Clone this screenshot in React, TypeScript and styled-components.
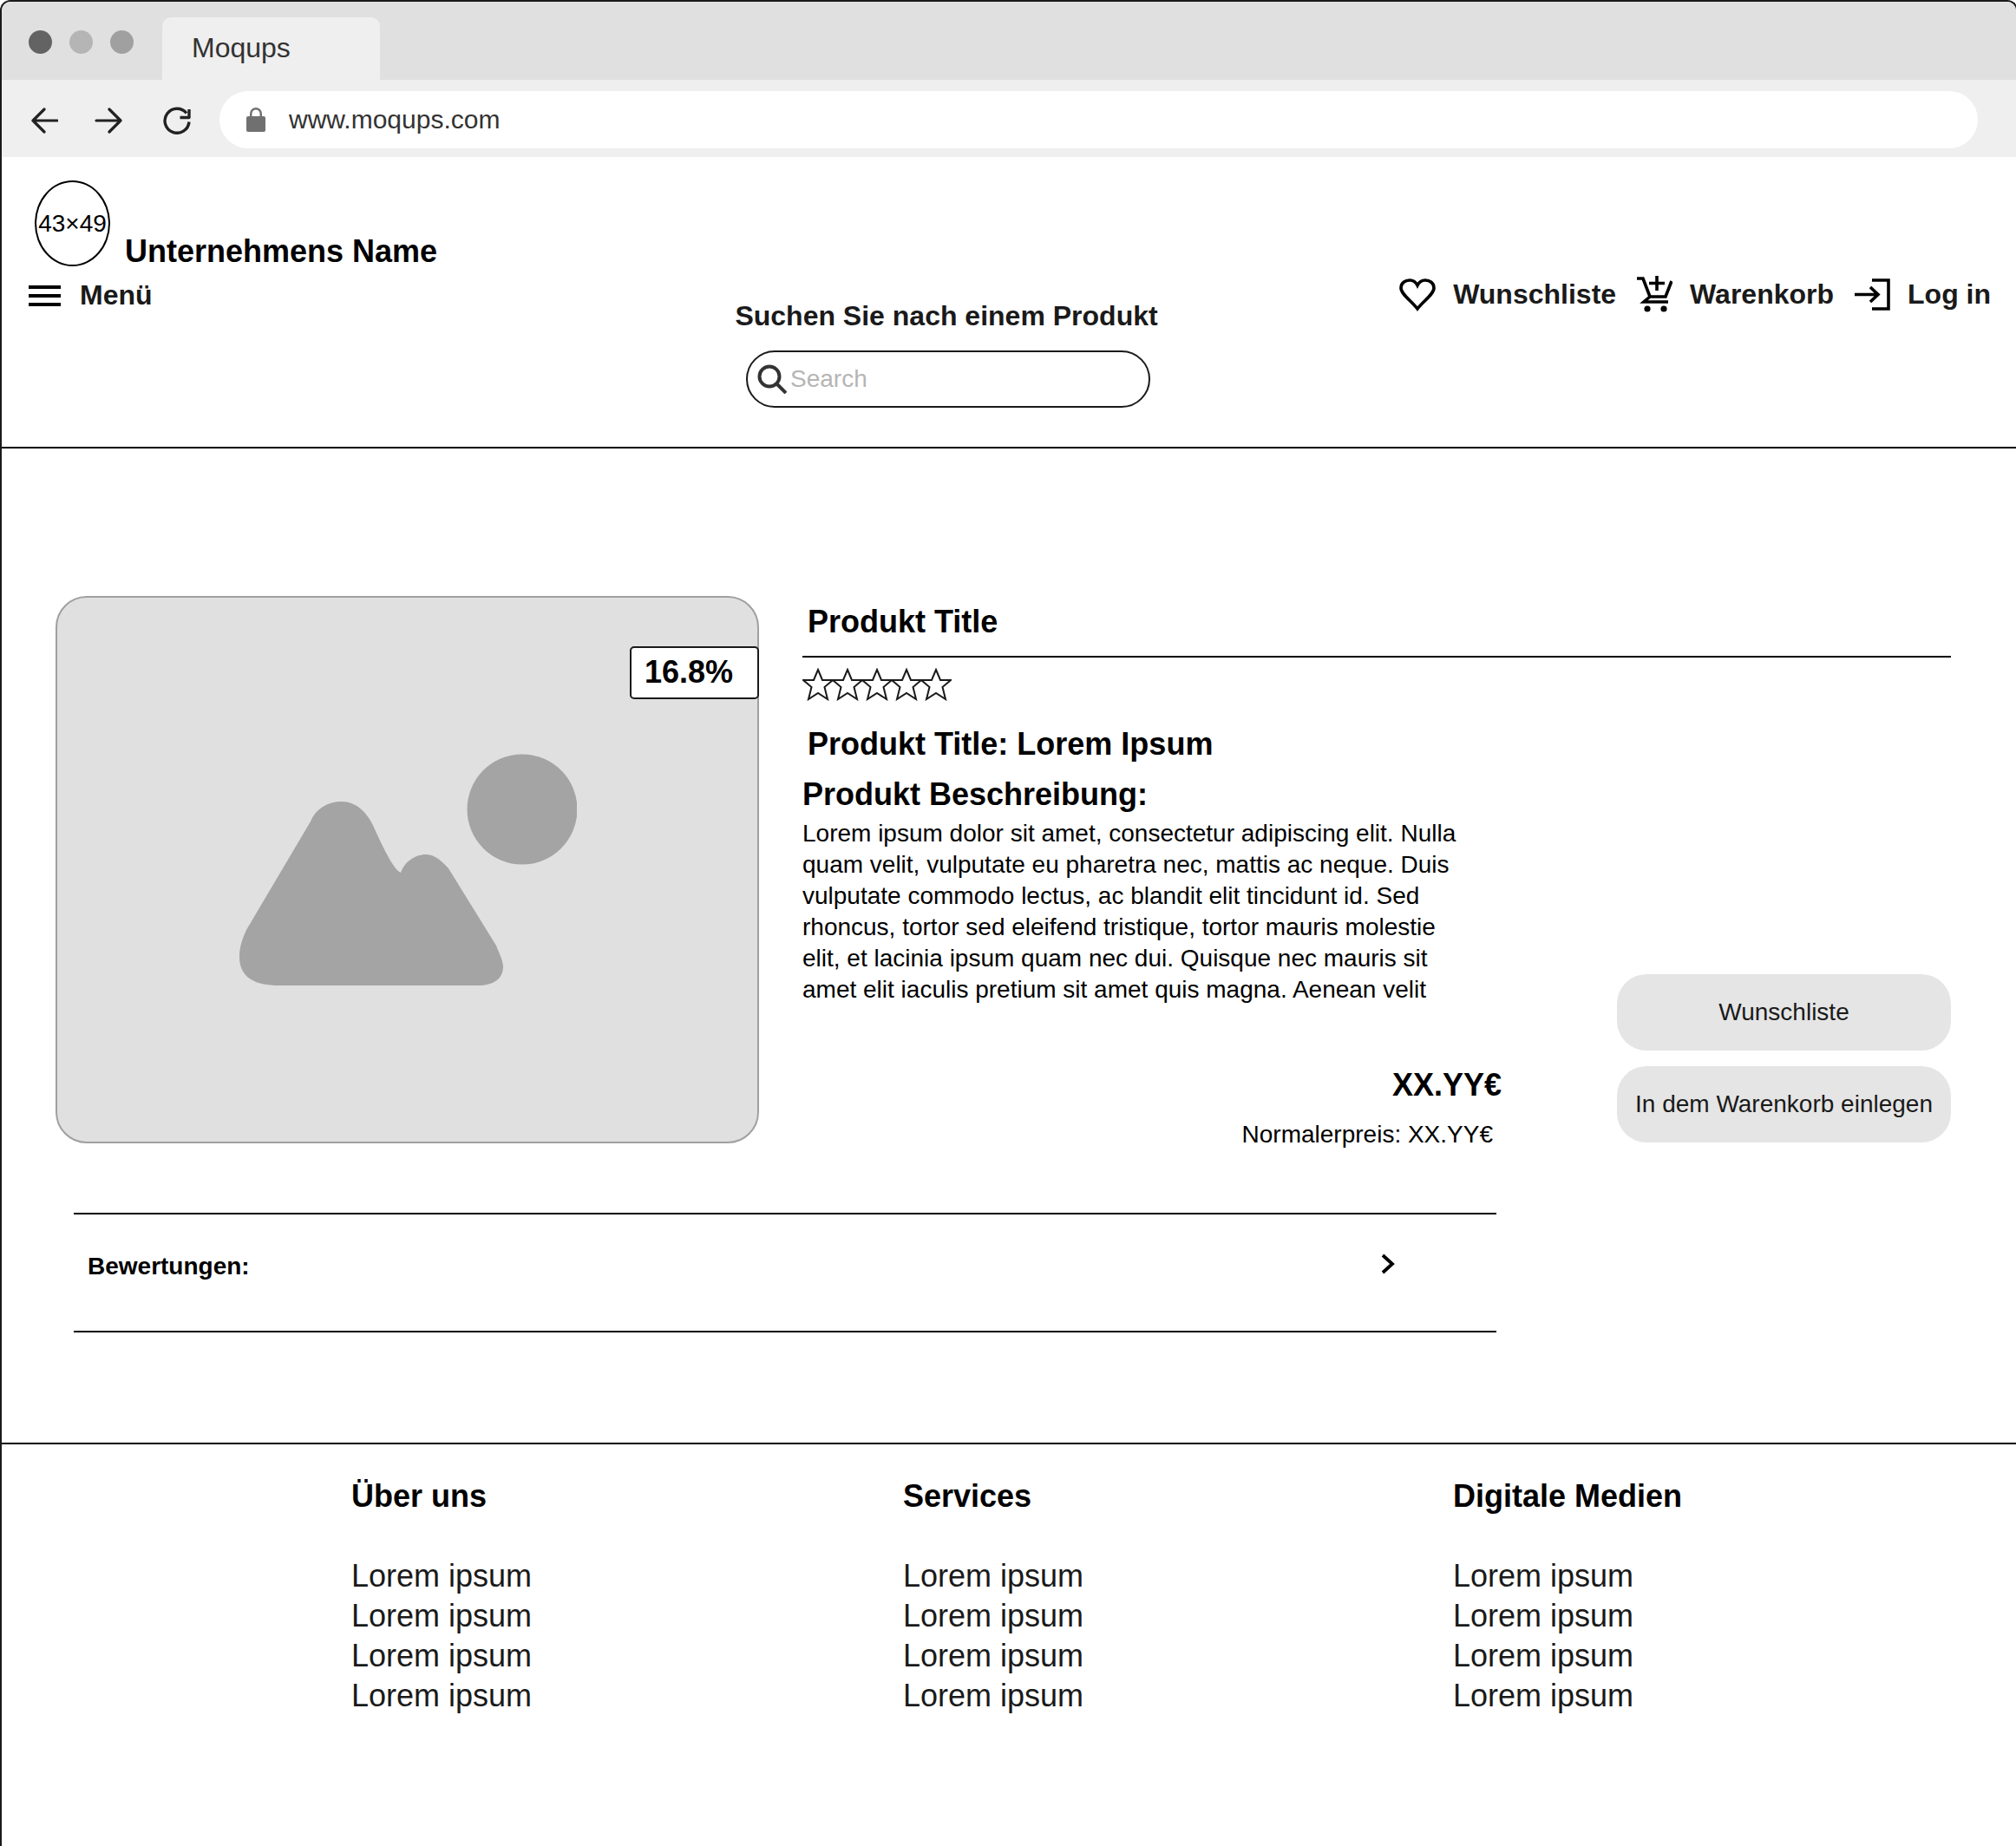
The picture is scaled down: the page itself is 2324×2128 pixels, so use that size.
import styled, { createGlobalStyle } from 'styled-components';

const GlobalStyle = createGlobalStyle`
  html, body {
    margin: 0;
    padding: 0;
    background: #fff;
    overflow: hidden;
  }
  * {
    box-sizing: border-box;
  }
`;

const Frame = styled.div`
  width: 2326px;
  height: 2128px;
  border-top: 2px solid #1a1a1a;
  border-left: 2px solid #1a1a1a;
  border-right: 2px solid #1a1a1a;
  border-radius: 12px 12px 0 0;
  overflow: hidden;
  font-family: 'Liberation Sans', Arial, sans-serif;
  color: #000;
`;

const TabStrip = styled.div`
  height: 90px;
  background: #e0e0e0;
  display: flex;
  padding-left: 31px;
`;

const Dots = styled.div`
  display: flex;
  gap: 20px;
  padding-top: 33px;
`;

const Dot = styled.span<{ $color: string }>`
  width: 27px;
  height: 27px;
  border-radius: 50%;
  background: ${(props) => props.$color};
`;

const Tab = styled.div`
  width: 251px;
  height: 72px;
  margin: 18px 0 0 33px;
  background: #efefef;
  border-radius: 10px 10px 0 0;
  padding: 17px 0 0 34px;
  font-size: 32px;
  line-height: 37px;
  color: #333;
`;

const Toolbar = styled.div`
  height: 89px;
  background: #efefef;
  display: flex;
  align-items: center;
  padding-left: 33px;
`;

const NavIcons = styled.div`
  display: flex;
  align-items: center;
  gap: 42px;
  width: 218px;
  padding-top: 4px;
`;

const ReloadIcon = styled.svg`
  margin-left: 5px;
`;

const AddressBar = styled.div`
  width: 2027px;
  height: 66px;
  margin-top: 2px;
  background: #fff;
  border-radius: 33px;
  display: flex;
  align-items: center;
  gap: 27px;
  padding-left: 31px;
  font-size: 30px;
  color: #333;
`;

const Header = styled.header`
  height: 336px;
  border-bottom: 2px solid #000;
  display: grid;
  grid-template-columns: 815px 486px 1fr;
  padding: 27px 29px 0 31px;
`;

const Brand = styled.div`
  display: flex;
  align-items: flex-end;
  gap: 17px;
  padding-left: 7px;
`;

const Logo = styled.div`
  width: 87px;
  height: 99px;
  border: 2px solid #000;
  border-radius: 50%;
  display: flex;
  align-items: center;
  justify-content: center;
  font-size: 28px;
  white-space: nowrap;
`;

const BrandName = styled.div`
  font-size: 36px;
  font-weight: 700;
  line-height: 41px;
  margin-bottom: -3px;
`;

const HeaderLink = styled.div`
  display: flex;
  align-items: center;
  height: 43px;
  font-size: 32px;
  font-weight: 700;
  line-height: 37px;
  color: #1a1a1a;
  white-space: nowrap;
`;

const MenuLink = styled(HeaderLink)`
  gap: 22px;
  margin-top: 12px;
`;

const SearchBlock = styled.div`
  display: flex;
  flex-direction: column;
  align-items: center;
  padding-top: 138px;
`;

const SearchTitle = styled.div`
  font-size: 32px;
  font-weight: 700;
  line-height: 37px;
  color: #1a1a1a;
  white-space: nowrap;
`;

const SearchField = styled.div`
  width: 466px;
  height: 66px;
  margin: 21px 0 0 4px;
  border: 2px solid #1a1a1a;
  border-radius: 33px;
  display: flex;
  align-items: center;
  gap: 4px;
  padding-left: 11px;
  font-size: 28px;
  color: #b5b5b5;
`;

const HeaderActions = styled.div`
  display: flex;
  align-items: flex-start;
  justify-content: flex-end;
  gap: 24px;
  padding-top: 110px;
`;

const ActionIcon = styled.span`
  display: flex;
  margin-right: 20px;
`;

const Main = styled.main`
  height: 1148px;
  border-bottom: 2px solid #000;
  padding: 170px 75px 0 62px;
`;

const ProductRow = styled.section`
  display: flex;
  gap: 50px;
  height: 631px;
`;

const ImageCard = styled.div`
  position: relative;
  flex: 0 0 811px;
  background: #e0e0e0;
  border: 2px solid #a0a0a0;
  border-radius: 36px;
  display: flex;
  align-items: center;
  justify-content: center;
`;

const DiscountBadge = styled.div`
  position: absolute;
  top: 56px;
  right: -2px;
  width: 149px;
  height: 61px;
  background: #fff;
  border: 2px solid #1a1a1a;
  border-radius: 5px;
  padding-left: 15px;
  font-size: 36px;
  font-weight: 700;
  line-height: 56px;
`;

const ProductInfo = styled.div`
  flex: 1;
  display: flex;
  flex-direction: column;
`;

const ProductTitle = styled.h1`
  margin: 0;
  padding-left: 6px;
  font-size: 36px;
  font-weight: 700;
  line-height: 41px;
`;

const FirstTitle = styled(ProductTitle)`
  padding-top: 9px;
`;

const TitleRule = styled.hr`
  width: 100%;
  height: 2px;
  flex: none;
  margin: 19px 0 12px;
  border: none;
  background: #000;
`;

const SubTitle = styled(ProductTitle)`
  margin-top: 29px;
`;

const SectionHeading = styled.h2`
  margin: 17px 0 0;
  font-size: 36px;
  font-weight: 700;
  line-height: 41px;
`;

const DetailRow = styled.div`
  flex: 1;
  min-height: 0;
  display: flex;
  justify-content: space-between;
  align-items: flex-end;
`;

const DetailText = styled.div`
  align-self: flex-start;
  width: 806px;
`;

const Description = styled.p`
  margin: 7px 0 0;
  width: 770px;
  font-size: 28px;
  line-height: 36px;
`;

const PriceBlock = styled.div`
  margin-top: 71px;
  display: flex;
  flex-direction: column;
  align-items: flex-end;
`;

const Price = styled.div`
  font-size: 36px;
  font-weight: 700;
  line-height: 41px;
`;

const RegularPrice = styled.div`
  margin: 21px 10px 0 0;
  font-size: 28px;
  line-height: 32px;
`;

const Buttons = styled.div`
  display: flex;
  flex-direction: column;
  gap: 18px;
  width: 385px;
  margin-bottom: 1px;
`;

const ActionButton = styled.button`
  height: 88px;
  padding: 0;
  border: none;
  border-radius: 34px;
  background: #e5e5e5;
  color: #1a1a1a;
  font-family: inherit;
  font-size: 28px;
`;

const ReviewRow = styled.div`
  width: 1640px;
  height: 138px;
  margin: 80px 0 0 21px;
  border-top: 2px solid #000;
  border-bottom: 2px solid #000;
  display: flex;
  align-items: center;
  justify-content: space-between;
  padding: 0 117px 14px 16px;
  font-size: 28px;
  font-weight: 700;
`;

const Chevron = styled.svg`
  margin-bottom: 6px;
`;

const Footer = styled.footer`
  display: grid;
  grid-template-columns: 636px 634px 1fr;
  padding: 39px 0 0 403px;
`;

const FooterColumn = styled.div`
  display: flex;
  flex-direction: column;
  font-size: 36px;
  line-height: 46px;
  color: #1a1a1a;
`;

const FooterTitle = styled.div`
  font-weight: 700;
  line-height: 41px;
  margin-bottom: 49px;
  color: #000;
`;

const footerColumns = ['Über uns', 'Services', 'Digitale Medien'];
const footerItems = ['Lorem ipsum', 'Lorem ipsum', 'Lorem ipsum', 'Lorem ipsum'];

const Stars = styled.svg`
  flex: none;
`;

function StarRow() {
  return (
    <Stars width="172" height="38" viewBox="0 0 172 38" fill="none" stroke="#1a1a1a" strokeWidth="2">
      {[0, 34, 68, 102, 136].map((x) => (
        <path
          key={x}
          transform={`translate(${x} 0)`}
          d="M18 2 L23 14 L35 14 L25.5 22 L29 36 L18 29 L7 36 L10.5 22 L1 14 L13 14 Z"
        />
      ))}
    </Stars>
  );
}

export default function App() {
  return (
    <Frame>
      <GlobalStyle />
      <TabStrip>
        <Dots>
          <Dot $color="#636363" />
          <Dot $color="#b5b5b5" />
          <Dot $color="#a0a0a0" />
        </Dots>
        <Tab>Moqups</Tab>
      </TabStrip>
      <Toolbar>
        <NavIcons>
          <svg width="32" height="32" viewBox="0 0 32 32" fill="none" stroke="#222" strokeWidth="3.2" strokeLinecap="round" strokeLinejoin="round">
            <path d="M31 16 H3 M16 3 L3 16 L16 29" />
          </svg>
          <svg width="32" height="32" viewBox="0 0 32 32" fill="none" stroke="#222" strokeWidth="3.2" strokeLinecap="round" strokeLinejoin="round">
            <path d="M2 16 H30 M17 3 L30 16 L17 29" />
          </svg>
          <ReloadIcon width="32" height="32" viewBox="0 0 32 32" fill="none" stroke="#222" strokeWidth="3.4" strokeLinejoin="round">
            <path d="M27 7.5 A14 14 0 1 0 30 17.5 M30 3 V12.5 H19.5" />
          </ReloadIcon>
        </NavIcons>
        <AddressBar>
          <svg width="22" height="28" viewBox="0 0 22 28" fill="#707070">
            <path d="M2 10 H4 V7 A7 7 0 0 1 18 7 V10 H20 A2 2 0 0 1 22 12 V26 A2 2 0 0 1 20 28 H2 A2 2 0 0 1 0 26 V12 A2 2 0 0 1 2 10 Z M6.5 10 H15.5 V7 A4.5 4.5 0 0 0 6.5 7 Z" />
          </svg>
          www.moqups.com
        </AddressBar>
      </Toolbar>
      <Header>
        <div>
          <Brand>
            <Logo>43×49</Logo>
            <BrandName>Unternehmens Name</BrandName>
          </Brand>
          <MenuLink>
            <svg width="37" height="24" viewBox="0 0 37 24" fill="#000">
              <path d="M0 0 H37 V4 H0 Z M0 10 H37 V14 H0 Z M0 20 H37 V24 H0 Z" />
            </svg>
            Menü
          </MenuLink>
        </div>
        <SearchBlock>
          <SearchTitle>Suchen Sie nach einem Produkt</SearchTitle>
          <SearchField>
            <svg width="34" height="34" viewBox="0 0 34 34" fill="none" stroke="#333" strokeWidth="4">
              <circle cx="14" cy="14" r="11.5" />
              <path d="M22 22 L33 33" />
            </svg>
            Search
          </SearchField>
        </SearchBlock>
        <HeaderActions>
          <HeaderLink>
            <ActionIcon>
              <svg width="42" height="38" viewBox="0 0 42 38" fill="none" stroke="#000" strokeWidth="3.6">
                <path d="M21 35 C14 26 2 18 2 11 C2 5 7 2 12 2 C16 2 19 4 21 8 C23 4 26 2 30 2 C35 2 40 5 40 11 C40 18 28 26 21 35 Z" />
              </svg>
            </ActionIcon>
            Wunschliste
          </HeaderLink>
          <HeaderLink>
            <ActionIcon>
              <svg width="41" height="43" viewBox="0 0 41 43" fill="none" stroke="#000" strokeWidth="3.6">
                <path d="M0 3 H7 L15 24 H33 L40 6 M15 24 L8 30 H36" />
                <path d="M23 0 V17 M14 8.5 H32" />
                <circle cx="12" cy="38" r="3.6" fill="#000" stroke="none" />
                <circle cx="31" cy="38" r="3.6" fill="#000" stroke="none" />
              </svg>
            </ActionIcon>
            Warenkorb
          </HeaderLink>
          <HeaderLink>
            <ActionIcon>
              <svg width="41" height="37" viewBox="0 0 41 37" fill="none" stroke="#000" strokeWidth="3.6">
                <path d="M0 18.5 H27 M18 10 L27 18.5 L18 27" />
                <path d="M20 2 H39 V35 H20" />
              </svg>
            </ActionIcon>
            Log in
          </HeaderLink>
        </HeaderActions>
      </Header>
      <Main>
        <ProductRow>
          <ImageCard>
            <DiscountBadge>16.8%</DiscountBadge>
            <svg width="391" height="268" viewBox="0 0 391 268" fill="#a4a4a4">
              <circle cx="328" cy="64" r="63.5" />
              <path
                transform="translate(0 53)"
                d="M48 214 C20 214 2 205 2 181 C2 172 4 163 10 150 L84 25 C90 10 104 2 120 2 C136 2 150 14 158 34 C170 60 180 80 188 84 C192 72 204 63 217 63 C228 63 236 72 243 79 L298 168 C302 178 306 186 306 192 C306 206 296 214 276 214 Z"
              />
            </svg>
          </ImageCard>
          <ProductInfo>
            <FirstTitle>Produkt Title</FirstTitle>
            <TitleRule />
            <StarRow />
            <SubTitle>Produkt Title: Lorem Ipsum</SubTitle>
            <SectionHeading>Produkt Beschreibung:</SectionHeading>
            <DetailRow>
              <DetailText>
                <Description>
                  Lorem ipsum dolor sit amet, consectetur adipiscing elit. Nulla quam velit, vulputate eu pharetra nec, mattis ac neque. Duis vulputate commodo lectus, ac blandit elit tincidunt id. Sed rhoncus, tortor sed eleifend tristique, tortor mauris molestie elit, et lacinia ipsum quam nec dui. Quisque nec mauris sit amet elit iaculis pretium sit amet quis magna. Aenean velit
                </Description>
                <PriceBlock>
                  <Price>XX.YY€</Price>
                  <RegularPrice>Normalerpreis: XX.YY€</RegularPrice>
                </PriceBlock>
              </DetailText>
              <Buttons>
                <ActionButton>Wunschliste</ActionButton>
                <ActionButton>In dem Warenkorb einlegen</ActionButton>
              </Buttons>
            </DetailRow>
          </ProductInfo>
        </ProductRow>
        <ReviewRow>
          Bewertungen:
          <Chevron width="16" height="24" viewBox="0 0 16 24" fill="none" stroke="#000" strokeWidth="3.8" strokeLinejoin="miter">
            <path d="M2 2 L13 12 L2 22" />
          </Chevron>
        </ReviewRow>
      </Main>
      <Footer>
        {footerColumns.map((title) => (
          <FooterColumn key={title}>
            <FooterTitle>{title}</FooterTitle>
            {footerItems.map((item, index) => (
              <span key={index}>{item}</span>
            ))}
          </FooterColumn>
        ))}
      </Footer>
    </Frame>
  );
}
